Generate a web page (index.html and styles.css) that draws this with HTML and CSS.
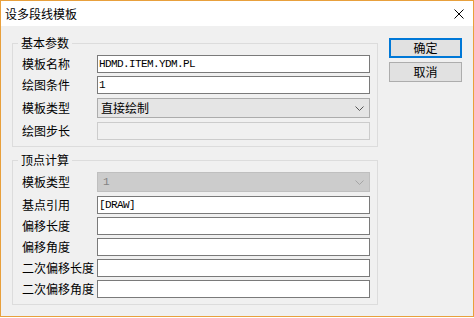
FILE: index.html
```html
<!DOCTYPE html>
<html lang="zh-CN">
<head>
<meta charset="utf-8">
<title>设多段线模板</title>
<link rel="stylesheet" href="styles.css">
</head>
<body>
<div class="window">
  <div class="titlebar">
    <span class="title">设多段线模板</span>
    <svg class="close" width="10" height="10" viewBox="0 0 10 10"><path d="M0.5 0.5 L9.5 9.5 M9.5 0.5 L0.5 9.5" stroke="#000" stroke-width="1" fill="none"/></svg>
  </div>
  <div class="client">
    <div class="main">
      <div class="group">
        <span class="legend">基本参数</span>
        <div class="rows">
          <div class="row"><span class="label">模板名称</span><input class="field" type="text" value="HDMD.ITEM.YDM.PL"></div>
          <div class="row"><span class="label">绘图条件</span><input class="field" type="text" value="1"></div>
          <div class="row row-select"><span class="label">模板类型</span>
            <div class="select"><span class="select-text">直接绘制</span><svg class="chev" width="9" height="5" viewBox="0 0 9 5"><polyline points="0.5,0.5 4.5,4.5 8.5,0.5" fill="none" stroke="currentColor" stroke-width="1"/></svg></div>
          </div>
          <div class="row row-after-select"><span class="label">绘图步长</span><input class="field field-disabled" type="text" value="" disabled></div>
        </div>
      </div>
      <div class="group">
        <span class="legend">顶点计算</span>
        <div class="rows">
          <div class="row row-select"><span class="label">模板类型</span>
            <div class="select select-disabled"><span class="select-text mono">1</span><svg class="chev" width="9" height="5" viewBox="0 0 9 5"><polyline points="0.5,0.5 4.5,4.5 8.5,0.5" fill="none" stroke="currentColor" stroke-width="1"/></svg></div>
          </div>
          <div class="row row-after-select"><span class="label">基点引用</span><input class="field" type="text" value="[DRAW]"></div>
          <div class="row"><span class="label">偏移长度</span><input class="field" type="text" value=""></div>
          <div class="row"><span class="label">偏移角度</span><input class="field" type="text" value=""></div>
          <div class="row"><span class="label">二次偏移长度</span><input class="field" type="text" value=""></div>
          <div class="row"><span class="label">二次偏移角度</span><input class="field" type="text" value=""></div>
        </div>
      </div>
    </div>
    <div class="buttons">
      <button class="btn btn-default" type="button">确定</button>
      <button class="btn" type="button">取消</button>
    </div>
  </div>
</div>
</body>
</html>
```
FILE: styles.css
```css
* { box-sizing: border-box; margin: 0; padding: 0; }
html, body { background: #ffffff; }
body {
  font-family: "Noto Sans CJK SC", "Noto Sans", sans-serif;
  font-size: 12px;
  color: #000;
}
.window {
  width: 474px;
  height: 317px;
  border: 1px solid #e8a03c;
  display: flex;
  flex-direction: column;
}
.titlebar {
  height: 25px;
  background: #fff;
  display: flex;
  align-items: center;
  justify-content: space-between;
  padding-left: 4px;
  padding-right: 9px;
}
.title { font-size: 12px; line-height: 14px; }
.close { display: block; }
.client {
  flex: 1;
  background: #f0f0f0;
  display: flex;
  gap: 11px;
  padding: 0 11px;
}
.main {
  width: 366px;
  padding-top: 17px;
  display: flex;
  flex-direction: column;
  gap: 13px;
}
.group {
  position: relative;
  border: 1px solid #dcdcdc;
  padding: 11px 7px 6px 9px;
}
.legend {
  position: absolute;
  top: -9px;
  left: 5px;
  padding: 0 3px;
  background: #f0f0f0;
  line-height: 16px;
}
.rows { display: flex; flex-direction: column; gap: 3px; }
.row {
  display: grid;
  grid-template-columns: 75px 273px;
  align-items: center;
}
.row-select, .row-after-select { margin-top: 1px; }
.rows > .row-select:first-child { margin-top: 0; }
.label { line-height: 14px; white-space: nowrap; }
.field {
  height: 18px;
  width: 273px;
  border: 1px solid #7a7a7a;
  background: #fff;
  padding: 0 0 0 1px;
  font-family: "Liberation Mono", monospace;
  font-size: 11px;
  letter-spacing: -0.6px;
  color: #000;
  outline: none;
}
.field-disabled {
  border-color: #cccccc;
  background: #f0f0f0;
}
.select {
  height: 20px;
  border: 1px solid #acacac;
  background: #e5e5e5;
  display: flex;
  align-items: center;
  justify-content: space-between;
  padding: 0 5px 0 3px;
  color: #555;
}
.select-text { color: #000; line-height: 14px; }
.select-disabled {
  background: #cccccc;
  border-color: #bfbfbf;
  color: #a5a5a5;
}
.select-disabled .select-text { color: #838383; padding-left: 2px; }
.mono {
  font-family: "Liberation Mono", monospace;
  font-size: 11px;
}
.chev { display: block; }
.buttons {
  width: 73px;
  padding-top: 12px;
  display: flex;
  flex-direction: column;
  gap: 4px;
}
.btn {
  height: 20px;
  width: 73px;
  border: 1px solid #adadad;
  background: #e1e1e1;
  font-family: "Noto Sans CJK SC", sans-serif;
  font-size: 12px;
  line-height: 14px;
  color: #000;
}
.btn-default {
  border-color: #0078d7;
  box-shadow: inset 0 0 0 1px #0078d7;
}
```
